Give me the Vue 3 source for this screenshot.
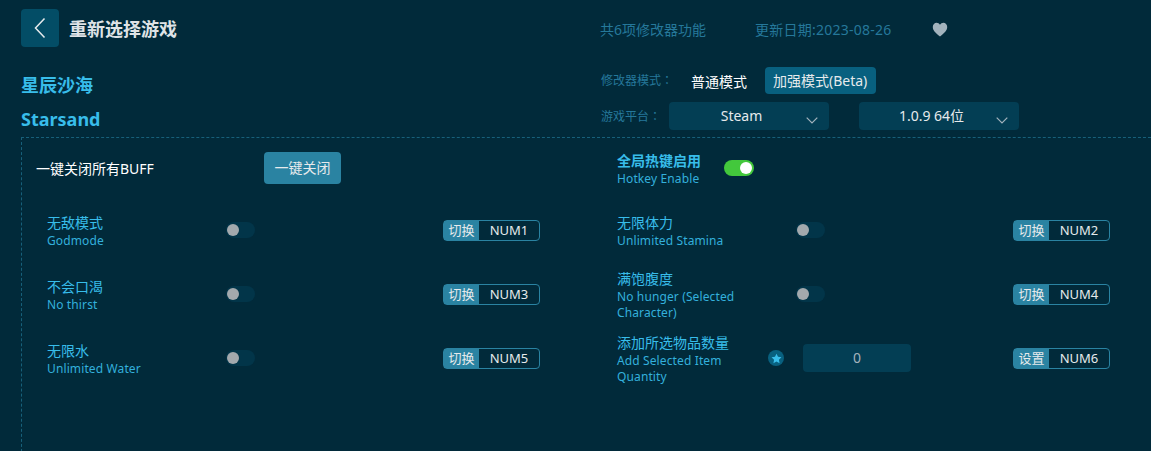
<template>
  <div class="page">
    <div class="top">
      <div class="top-left">
        <div class="back-row">
          <div class="back-btn">
            <svg width="14" height="22" viewBox="0 0 14 22">
              <path d="M11.5 1.5 2.5 11l9 9.5" fill="none" stroke="#e6eaec" stroke-width="1.5" />
            </svg>
          </div>
          <span class="back-text">重新选择游戏</span>
        </div>
        <div class="game-cn">星辰沙海</div>
        <div class="game-en">Starsand</div>
      </div>
      <div class="top-right">
        <div class="meta">
          <span class="meta-count">共6项修改器功能</span>
          <span class="meta-date">更新日期:2023-08-26</span>
          <svg class="heart" width="16" height="15" viewBox="0 0 16 15">
            <path d="M8 14.5C3.5 10.8.8 8.4.8 5 .8 2.6 2.6.8 4.6.8 6 .8 7.3 1.5 8 2.8 8.7 1.5 10 .8 11.4.8c2 0 3.8 1.8 3.8 4.2 0 3.4-2.7 5.8-7.2 9.5z" fill="#a3b3bd" />
          </svg>
        </div>
        <div class="mode-row">
          <span class="opt-label">修改器模式：</span>
          <span class="mode-plain">普通模式</span>
          <span class="mode-active">加强模式(Beta)</span>
        </div>
        <div class="plat-row">
          <span class="opt-label plat-label">游戏平台：</span>
          <div v-for="s in selects" :key="s" class="select">
            <span>{{ s }}</span>
            <svg class="arrow" width="12" height="7" viewBox="0 0 12 7">
              <path d="M.7.7 6 6l5.3-5.3" fill="none" stroke="#a3b3bd" stroke-width="1.2" />
            </svg>
          </div>
        </div>
      </div>
    </div>

    <div class="panel">
      <div class="panel-head">
        <span class="close-text">一键关闭所有BUFF</span>
        <div class="close-btn">一键关闭</div>
        <div class="hotkey-enable">
          <div class="names">
            <div class="cn bold">全局热键启用</div>
            <div class="en">Hotkey Enable</div>
          </div>
          <div class="switch on"><i></i></div>
        </div>
      </div>
      <div class="grid">
        <div v-for="item in items" :key="item.key" class="item">
          <div class="names">
            <div class="cn">{{ item.cn }}</div>
            <div class="en">{{ item.en }}</div>
          </div>
          <div v-if="item.input" class="ctl ctl-input">
            <div class="star">
              <svg width="11" height="11" viewBox="0 0 24 24">
                <path d="M12 1.5l3.3 6.9 7.5 1-5.5 5.2 1.4 7.5L12 18.5l-6.7 3.6 1.4-7.5L1.2 9.4l7.5-1z" fill="#38bdea" />
              </svg>
            </div>
            <div class="num-input">0</div>
          </div>
          <div v-else class="ctl">
            <div class="switch"><i></i></div>
          </div>
          <div class="hotkey">
            <span class="hk-tag">{{ item.input ? '设置' : '切换' }}</span>
            <span class="hk-key">{{ item.key }}</span>
          </div>
        </div>
      </div>
    </div>
  </div>
</template>

<script setup>
const selects = ["Steam", "1.0.9 64位"];

const items = [
  { key: "NUM1", cn: "无敌模式", en: "Godmode" },
  { key: "NUM2", cn: "无限体力", en: "Unlimited Stamina" },
  { key: "NUM3", cn: "不会口渴", en: "No thirst" },
  { key: "NUM4", cn: "满饱腹度", en: "No hunger (Selected Character)" },
  { key: "NUM5", cn: "无限水", en: "Unlimited Water" },
  { key: "NUM6", cn: "添加所选物品数量", en: "Add Selected Item Quantity", input: true },
];
</script>

<style>
html,
body {
  margin: 0;
  background: #012a3a;
  overflow: hidden;
}
</style>

<style scoped>
.page {
  width: 1151px;
  height: 451px;
  overflow: hidden;
  background: #012a3a;
  font-family: "Noto Sans", "Noto Sans CJK SC", sans-serif;
}

.top {
  display: flex;
  height: 137px;
}

.top-left {
  width: 579px;
  margin-left: 21px;
  padding-top: 9px;
}

.back-row {
  display: flex;
  align-items: center;
  gap: 10px;
}

.back-btn {
  width: 38px;
  height: 38px;
  border-radius: 4px;
  background: #034d66;
  display: flex;
  align-items: center;
  justify-content: center;
}

.back-text {
  font-size: 18px;
  font-weight: 700;
  color: #dfe3e6;
}

.game-cn {
  margin-top: 25px;
  font-size: 18px;
  line-height: 26px;
  font-weight: 700;
  color: #38bdea;
}

.game-en {
  margin-top: 8px;
  font-size: 18px;
  line-height: 26px;
  font-weight: 700;
  color: #38bdea;
}

.meta {
  height: 58px;
  display: flex;
  align-items: center;
  font-size: 14px;
  color: #25789a;
}

.meta-date {
  margin-left: 49px;
  letter-spacing: 0.25px;
}

.heart {
  margin-left: 40px;
}

.mode-row {
  display: flex;
  align-items: center;
  height: 27px;
  margin-top: 9px;
}

.opt-label {
  width: 90px;
  margin-left: 1px;
  margin-top: -2px;
  font-family: "Noto Sans CJK TC", sans-serif;
  font-size: 12px;
  color: #25789a;
}

.plat-label {
  width: 68px;
}

.mode-plain {
  font-size: 14px;
  color: #fff;
  width: 74px;
}

.mode-active {
  height: 27px;
  line-height: 27px;
  padding: 0 8px;
  width: 95px;
  border-radius: 4px;
  background: #08607f;
  font-size: 14px;
  color: #e6eaec;
  white-space: nowrap;
}

.plat-row {
  display: flex;
  align-items: center;
  gap: 30px;
  margin-top: 8px;
}

.plat-row .plat-label {
  margin-right: -30px;
}

.select {
  position: relative;
  width: 160px;
  height: 28px;
  border-radius: 4px;
  background: #033e54;
  font-size: 14px;
  line-height: 28px;
  color: #e6eaec;
  text-align: center;
  padding-right: 15px;
  box-sizing: border-box;
}

.arrow {
  position: absolute;
  right: 11px;
  top: 15px;
}

.panel {
  margin-left: 21px;
  width: 1140px;
  height: 320px;
  border-top: 1px dashed #17607a;
  border-left: 1px dashed #17607a;
  padding-top: 14px;
  box-sizing: border-box;
}

.panel-head {
  display: flex;
  align-items: center;
  height: 32px;
  margin-bottom: 14px;
  padding-left: 14px;
}

.close-text {
  width: 228px;
  font-size: 14px;
  color: #fff;
}

.close-btn {
  width: 77px;
  height: 32px;
  line-height: 32px;
  text-align: center;
  border-radius: 4px;
  background: #2a83a2;
  font-size: 14px;
  color: #e6eaec;
}

.hotkey-enable {
  display: flex;
  align-items: center;
  gap: 23px;
  margin-left: 276px;
}

.names {
  padding-top: 3px;
}

.grid {
  display: grid;
  grid-template-columns: 570px 570px;
  grid-auto-rows: 64px;
  padding-left: 25px;
}

.item {
  display: flex;
  align-items: center;
}

.item .names {
  width: 140px;
}

.cn {
  font-size: 14px;
  line-height: 18px;
  color: #38bdea;
}

.cn.bold {
  font-weight: 700;
}

.en {
  font-size: 12px;
  line-height: 16px;
  margin-top: 1px;
  letter-spacing: 0.12px;
  color: #33b0dc;
}

.ctl {
  width: 256px;
  box-sizing: border-box;
  padding-left: 39px;
  display: flex;
  align-items: center;
}

.ctl-input {
  padding-left: 11px;
  gap: 19px;
}

.switch {
  position: relative;
  width: 29px;
  height: 16px;
  border-radius: 8px;
  background: #023549;
}

.switch i {
  position: absolute;
  left: 1px;
  top: 2px;
  width: 12px;
  height: 12px;
  border-radius: 50%;
  background: #a3a9ad;
}

.switch.on {
  width: 30px;
  background: #43c83c;
}

.switch.on i {
  left: 16px;
  background: #fff;
}

.star {
  width: 16px;
  height: 16px;
  border-radius: 50%;
  background: #08607f;
  display: flex;
  align-items: center;
  justify-content: center;
}

.num-input {
  width: 108px;
  height: 28px;
  line-height: 28px;
  border-radius: 4px;
  background: #033e54;
  text-align: center;
  font-size: 14px;
  color: #a3b3bd;
}

.hotkey {
  display: flex;
  width: 97px;
  height: 21px;
  box-sizing: border-box;
  border: 1px solid #2a83a2;
  border-radius: 4px;
  font-size: 13px;
  line-height: 18px;
}

.hk-tag {
  width: 35px;
  flex-shrink: 0;
  text-align: center;
  background: #2a83a2;
  color: #e6eaec;
}

.hk-key {
  flex: 1;
  text-align: center;
  color: #e6eaec;
}
</style>
